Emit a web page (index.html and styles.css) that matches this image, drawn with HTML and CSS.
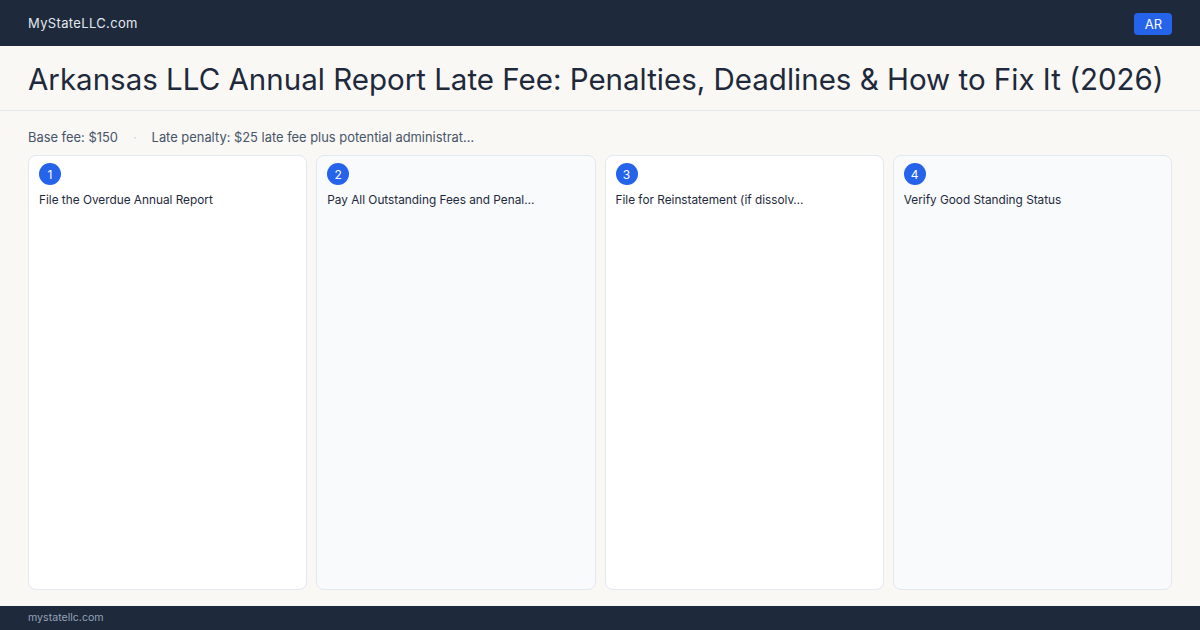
FILE: index.html
```html
<!DOCTYPE html>
<html lang="en">
<head>
<meta charset="UTF-8">
<meta name="viewport" content="width=device-width, initial-scale=1.0">
<title>Arkansas LLC Annual Report Late Fee</title>
<link rel="stylesheet" href="styles.css">
</head>
<body>

<div class="topbar">
  <span class="brand">MyStateLLC.com</span>
  <span class="state-badge">AR</span>
</div>

<div class="title-bar">
  <h1>Arkansas LLC Annual Report Late Fee: Penalties, Deadlines &amp; How to Fix It (2026)</h1>
</div>

<div class="main">
  <div class="fees">
    <span>Base fee: $150</span>
    <span class="sep">·</span>
    <span>Late penalty: $25 late fee plus potential administrat…</span>
  </div>

  <div class="steps">
    <div class="step">
      <span class="num">1</span>
      <p>File the Overdue Annual Report</p>
    </div>
    <div class="step alt">
      <span class="num">2</span>
      <p>Pay All Outstanding Fees and Penal…</p>
    </div>
    <div class="step">
      <span class="num">3</span>
      <p>File for Reinstatement (if dissolv…</p>
    </div>
    <div class="step alt">
      <span class="num">4</span>
      <p>Verify Good Standing Status</p>
    </div>
  </div>
</div>

<div class="footer">mystatellc.com</div>

</body>
</html>
```

FILE: styles.css
```css
body {
  margin: 0;
  height: 630px;
  font-family: Inter, "Noto Sans", sans-serif;
  background-color: #f9f8f5;
  color: #1e293b;
  display: flex;
  flex-direction: column;
}
.topbar {
  height: 46px;
  background-color: #1e293b;
  display: flex;
  align-items: center;
  justify-content: space-between;
  padding: 0 28px;
}
.brand {
  color: #e2e8f0;
  font-size: 13px;
  letter-spacing: 0.35px;
}
.state-badge {
  background-color: #2563eb;
  color: white;
  font-size: 13px;
  padding: 0 10px 0 11px;
  height: 22px;
  line-height: 22px;
  border-radius: 4px;
  margin-top: 1px;
}
.title-bar {
  height: 64px;
  border-bottom: 1px solid #e2e8f0;
  padding: 0 28px;
  display: flex;
  align-items: center;
}
h1 {
  margin: 0;
  font-size: 29.5px;
  font-weight: 400;
  color: #1e293b;
  white-space: nowrap;
  padding-top: 2px;
}
.main {
  flex: 1;
  padding: 16px 28px 16px;
  display: flex;
  flex-direction: column;
  min-height: 0;
}
.fees {
  font-size: 12.9px;
  color: #475569;
  display: flex;
  gap: 15px;
  height: 20px;
  align-items: center;
}
.sep {
  color: #cbd5e1;
}
.steps {
  flex: 1;
  margin-top: 8px;
  display: grid;
  grid-template-columns: repeat(4, 1fr);
  gap: 9px;
}
.step {
  background-color: white;
  border: 1px solid #e2e8f0;
  border-radius: 8px;
  padding: 7px 10px;
}
.step.alt {
  background-color: #f8fafc;
}
.num {
  display: flex;
  width: 22px;
  height: 22px;
  border-radius: 50%;
  background-color: #2563eb;
  color: white;
  font-size: 12px;
  align-items: center;
  justify-content: center;
}
.step p {
  margin: 8px 0 0;
  font-size: 11.8px;
  color: #1e293b;
}
.footer {
  height: 24px;
  background-color: #1e293b;
  color: #94a3b8;
  font-size: 10.6px;
  line-height: 24px;
  padding: 0 28px;
}
```
